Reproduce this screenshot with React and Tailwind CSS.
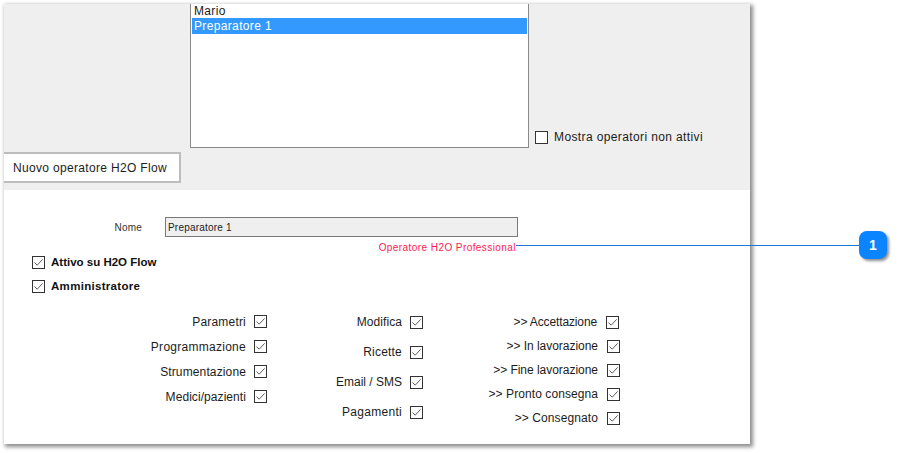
const col1 = [
  { label: 'Parametri', track: 'tracking-[0.2px]' },
  { label: 'Programmazione', track: 'tracking-[0.27px]' },
  { label: 'Strumentazione', track: 'tracking-[0.13px]' },
  { label: 'Medici/pazienti', track: 'tracking-[0.07px]' },
];
const col2 = [
  { label: 'Modifica', track: 'tracking-[0.07px]' },
  { label: 'Ricette', track: 'tracking-[0.2px]' },
  { label: 'Email / SMS', track: 'tracking-[0px]' },
  { label: 'Pagamenti', track: 'tracking-[0.3px]' },
];
const col3 = [
  { label: '>> Accettazione', track: 'tracking-[-0.13px]', gap: 'ml-[9px] mr-[1px]' },
  { label: '>> In lavorazione', track: 'tracking-[-0.03px]', gap: 'ml-[9px]' },
  { label: '>> Fine lavorazione', track: 'tracking-[-0.03px]', gap: 'ml-[9px]' },
  { label: '>> Pronto consegna', track: 'tracking-[0.08px]', gap: 'ml-[9px]' },
  { label: '>> Consegnato', track: 'tracking-[0.1px]', gap: 'ml-[9px]' },
];

function CheckBox({ checked = true }) {
  return (
    <span className="block w-[13px] h-[13px] shrink-0 border border-[#333333] bg-white">
      {checked && (
        <svg viewBox="0 0 11 11" className="w-[11px] h-[11px]" fill="none" stroke="#5c5c5c" strokeWidth="1">
          <path d="M1.5 5.5 L4.2 8.2 L9.6 2.4" />
        </svg>
      )}
    </span>
  );
}

function PermRow({ label, track, rowClass, gap = 'ml-[8px]' }) {
  return (
    <div className={`flex items-center justify-end ${rowClass}`}>
      <span className={`text-[12px] text-[#1c1c1c] whitespace-nowrap ${track}`}>{label}</span>
      <span className={gap}>
        <CheckBox />
      </span>
    </div>
  );
}

export default function App() {
  return (
    <div className="relative w-[908px] h-[453px] bg-white overflow-hidden font-['Liberation_Sans',Arial,sans-serif]">
      <div className="pl-[4px] pt-[4px]">
        <div className="w-[746px] h-[440px] bg-white shadow-[2px_2px_4px_1px_rgba(0,0,0,0.45)]">
          <div className="h-[186px] bg-[#efefef]">
            <div className="flex pl-[186px]">
              <div className="w-[339px] h-[144px] bg-white border-x border-b border-[#8a8a8a] px-[1px] text-[12px] tracking-[0.35px] leading-[14px]">
                <div className="h-[14px] pl-[2px] text-[#1c1c1c]">Mario</div>
                <div className="h-[16px] pl-[2px] flex items-center bg-[#3399ff] text-white">Preparatore 1</div>
              </div>
              <label className="self-end flex items-center ml-[6px] mb-[2px]">
                <CheckBox checked={false} />
                <span className="ml-[6px] text-[12px] tracking-[0.38px] text-[#1c1c1c]">Mostra operatori non attivi</span>
              </label>
            </div>
            <div className="mt-[4px] w-[177px] h-[31px] flex items-center pl-[9px] bg-white border-2 border-l-0 border-[#bdbdbd] text-[12px] tracking-[0.33px] text-[#1c1c1c]">
              Nuovo operatore H2O Flow
            </div>
          </div>

          <div className="pt-[27px]">
            <div className="flex items-center h-[20px]">
              <span className="w-[138px] text-right text-[10px] tracking-[0.2px] text-[#333333]">Nome</span>
              <div className="ml-[23px] w-[353px] h-[20px] flex items-center pl-[2px] bg-[#efefef] border border-[#7a7a7a] text-[10px] tracking-[0.2px] text-[#222222]">
                Preparatore 1
              </div>
            </div>
            <div className="w-[512px] h-[14px] mt-[4px] text-right text-[10px] leading-[14px] tracking-[0.43px] text-[#ff1a4f]">
              Operatore H2O Professional
            </div>
            <div className="flex items-center pl-[28px] h-[15px]">
              <CheckBox />
              <span className="ml-[6px] text-[11.5px] font-bold text-[#111111]">Attivo su H2O Flow</span>
            </div>
            <div className="flex items-center mt-[9px] pl-[28px] h-[15px]">
              <CheckBox />
              <span className="ml-[6px] text-[11.5px] tracking-[0.3px] font-bold text-[#111111]">Amministratore</span>
            </div>

            <div className="flex items-start mt-[13px]">
              <div className="w-[263px] pt-[2px] flex flex-col">
                {col1.map((r) => (
                  <PermRow key={r.label} label={r.label} track={r.track} rowClass="h-[25px]" />
                ))}
              </div>
              <div className="w-[156px] flex flex-col">
                {col2.map((r) => (
                  <PermRow key={r.label} label={r.label} track={r.track} rowClass="h-[30px]" />
                ))}
              </div>
              <div className="w-[197px] pt-[3px] flex flex-col">
                {col3.map((r) => (
                  <PermRow key={r.label} label={r.label} track={r.track} gap={r.gap} rowClass="h-[24px]" />
                ))}
              </div>
            </div>
          </div>
        </div>
      </div>

      {/* callout */}
      <div className="absolute left-[516px] top-[245px] w-[343px] h-[1px] bg-[#1e78d2]"></div>
      <div className="absolute left-[859px] top-[231px] w-[28px] h-[28px] rounded-[8px] bg-[#0a84ff] shadow-[2px_2px_3px_rgba(0,0,0,0.45)] flex items-center justify-center text-white text-[14px] font-bold">
        1
      </div>
    </div>
  );
}
